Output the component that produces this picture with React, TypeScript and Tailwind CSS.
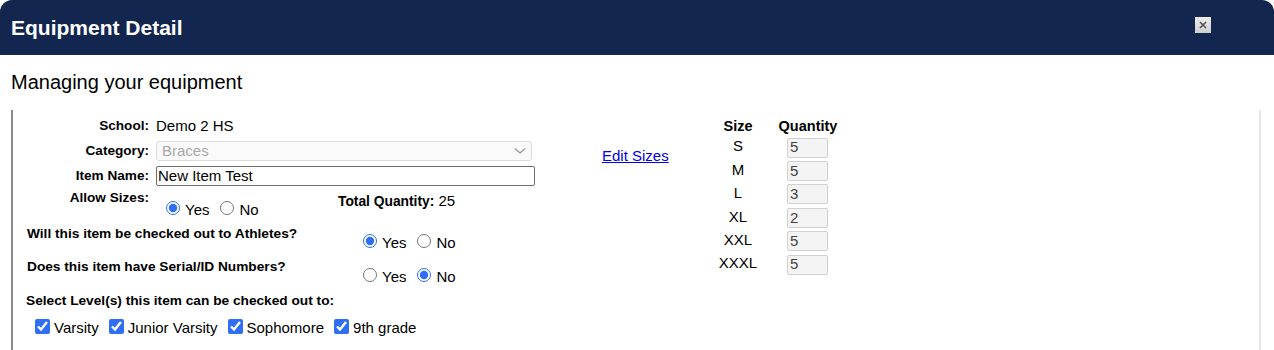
import React from "react";

const F = { fontFamily: '"Liberation Sans", Arial, Helvetica, sans-serif' };

function Radio({ checked, name }: { checked: boolean; name: string }) {
  return (
    <input
      type="radio"
      name={name}
      defaultChecked={checked}
      className="m-0 w-[14px] h-[14px] accent-[#2f6ff5] shrink-0"
    />
  );
}

function YesNo({ name, yes }: { name: string; yes: boolean }) {
  return (
    <div className="flex items-center h-[16px]">
      <Radio name={name} checked={yes} />
      <span className="ml-[5px] text-[15px] leading-[16px] translate-y-[2px]">Yes</span>
      <span className="ml-[11px]" />
      <Radio name={name} checked={!yes} />
      <span className="ml-[5px] text-[15px] leading-[16px] translate-y-[2px]">No</span>
    </div>
  );
}

function Check({ label }: { label: string }) {
  return (
    <label className="flex items-center mr-[10px]">
      <input type="checkbox" defaultChecked className="m-0 w-[15px] h-[15px] accent-[#2f6ff5] shrink-0" />
      <span className="ml-[4px] text-[15px] leading-[16px] translate-y-[2px]">{label}</span>
    </label>
  );
}

const sizes = [
  ["S", "5"],
  ["M", "5"],
  ["L", "3"],
  ["XL", "2"],
  ["XXL", "5"],
  ["XXXL", "5"],
];

export default function App() {
  return (
    <div className="w-[1274px] h-[350px] overflow-hidden bg-white text-black" style={F}>
      <div className="h-[55px] bg-[#13264f] rounded-t-[12px] flex justify-between pl-[11px] pr-[63px]">
        <div className="text-white font-bold text-[21px] leading-[55px]">Equipment Detail</div>
        <div className="mt-[17px] w-[16px] h-[16px] bg-gradient-to-b from-[#ececec] to-[#cfcfcf] flex items-center justify-center">
          <svg width="8" height="8" viewBox="0 0 8 8">
            <path d="M1 1L7 7M7 1L1 7" stroke="#555" strokeWidth="1.6" />
          </svg>
        </div>
      </div>
      <div className="pl-[11px] pt-[15px] h-[55px] text-[20px] leading-[24px]">Managing your equipment</div>
      <div className="ml-[11px] w-[1250px] h-[260px] border-l-2 border-[#8a8a8a] border-r-2 border-r-[#e6e6e6] flex">
        <div className="w-[589px] pt-[7px]">
          <div className="flex items-center h-[18px]">
            <div className="w-[136px] text-right font-bold text-[13.6px]">School:</div>
            <div className="ml-[7px] text-[15px]">Demo 2 HS</div>
          </div>
          <div className="flex items-center h-[20px] mt-[6px]">
            <div className="w-[136px] text-right font-bold text-[13.6px]">Category:</div>
            <div className="ml-[7px] w-[376px] h-[20px] bg-[#fafafa] border border-[#dcdcdc] rounded-[3px] flex items-center justify-between pl-[5px] pr-[5px]">
              <span className="text-[15px] text-[#a8a8a8]">Braces</span>
              <svg width="12" height="8" viewBox="0 0 12 8">
                <path d="M1 1.5L6 6L11 1.5" stroke="#a0a0a0" strokeWidth="1.6" fill="none" />
              </svg>
            </div>
          </div>
          <div className="flex items-center h-[20px] mt-[5px]">
            <div className="w-[136px] text-right font-bold text-[13.6px]">Item Name:</div>
            <div className="ml-[7px] w-[379px] h-[20px] border border-[#6e6e6e] rounded-[2px] flex items-center pl-[1px] text-[15px]">
              New Item Test
            </div>
          </div>
          <div className="flex h-[26px] mt-[4px]">
            <div className="w-[136px] text-right font-bold text-[13.6px] leading-[16px]">Allow Sizes:</div>
            <div className="ml-[7px] w-[182px] pl-[10px] mt-[10px]">
              <YesNo name="allow" yes={true} />
            </div>
            <div className="mt-[3px] leading-[16px] text-[15px]">
              <span className="font-bold text-[13.8px]">Total Quantity:</span> 25
            </div>
          </div>
          <div className="flex h-[33px] mt-[10px] pl-[14px]">
            <div className="w-[336px] font-bold text-[13.7px] leading-[16px]">Will this item be checked out to Athletes?</div>
            <div className="mt-[7px]">
              <YesNo name="athletes" yes={true} />
            </div>
          </div>
          <div className="flex h-[33px] pl-[14px]">
            <div className="w-[336px] font-bold text-[13.7px] leading-[16px]">Does this item have Serial/ID Numbers?</div>
            <div className="mt-[8px]">
              <YesNo name="serial" yes={false} />
            </div>
          </div>
          <div className="pl-[13px] font-bold text-[13.7px] leading-[17px]">Select Level(s) this item can be checked out to:</div>
          <div className="flex items-center h-[16px] mt-[9px] pl-[22px]">
            <Check label="Varsity" />
            <Check label="Junior Varsity" />
            <Check label="Sophomore" />
            <Check label="9th grade" />
          </div>
        </div>
        <div className="w-[116px] pt-[34px]">
          <a href="#" className="text-[#0000ee] underline text-[15px] leading-[18px]">Edit Sizes</a>
        </div>
        <div className="pt-[7px]">
          <div className="flex h-[19px] items-center font-bold text-[14.5px]">
            <div className="w-[40px] text-center">Size</div>
            <div className="ml-[20px] w-[60px] text-center">Quantity</div>
          </div>
          {sizes.map(([s, q]) => (
            <div key={s} className="flex h-[23.4px] items-center">
              <div className="w-[40px] text-center text-[15px] -translate-y-[1px]">{s}</div>
              <div className="ml-[29px] w-[41px] h-[20px] bg-[#f4f4f4] border border-[#d0d0d0] rounded-[2px] flex items-center pl-[2px] text-[15px] text-[#444]">
                {q}
              </div>
            </div>
          ))}
        </div>
      </div>
    </div>
  );
}
